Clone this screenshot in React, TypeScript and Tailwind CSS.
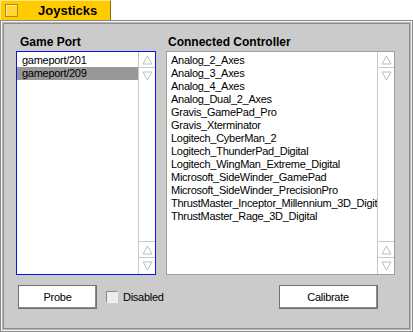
import React from "react";

const controllers = [
  "Analog_2_Axes",
  "Analog_3_Axes",
  "Analog_4_Axes",
  "Analog_Dual_2_Axes",
  "Gravis_GamePad_Pro",
  "Gravis_Xterminator",
  "Logitech_CyberMan_2",
  "Logitech_ThunderPad_Digital",
  "Logitech_WingMan_Extreme_Digital",
  "Microsoft_SideWinder_GamePad",
  "Microsoft_SideWinder_PrecisionPro",
  "ThrustMaster_Inceptor_Millennium_3D_Digital",
  "ThrustMaster_Rage_3D_Digital",
];

const ports = ["gameport/201", "gameport/209"];

function Arrow({ up }: { up: boolean }) {
  return (
    <div className="flex h-[16px] w-full items-center justify-center border-b border-[#c8c8c8] last:border-b-0">
      <svg width="11" height="10" viewBox="0 0 11 10">
        {up ? (
          <polygon points="5.5,1 10,9 1,9" fill="none" stroke="#bdbdbd" strokeWidth="1" />
        ) : (
          <polygon points="1,1 10,1 5.5,9" fill="none" stroke="#bdbdbd" strokeWidth="1" />
        )}
      </svg>
    </div>
  );
}

function ScrollBar() {
  return (
    <div className="flex w-[17px] shrink-0 flex-col justify-between border-l border-[#c8c8c8] bg-white">
      <div className="flex flex-col">
        <Arrow up />
        <Arrow up={false} />
      </div>
      <div className="flex flex-col border-t border-[#c8c8c8]">
        <Arrow up />
        <Arrow up={false} />
      </div>
    </div>
  );
}

function Button({ label, width }: { label: string; width: string }) {
  return (
    <div
      className={`${width} flex h-[24px] items-center justify-center border border-[#707070] bg-white text-[11px] text-black shadow-[inset_-1px_-1px_0_#8a8a8a,inset_1px_1px_0_#ffffff]`}
    >
      {label}
    </div>
  );
}

export default function App() {
  return (
    <div
      className="flex h-[332px] w-[413px] flex-col bg-white text-black"
      style={{ fontFamily: '"Liberation Sans", Arial, sans-serif' }}
    >
      {/* Tab */}
      <div className="flex h-[20px] shrink-0">
        <div className="flex w-[111px] items-center border-l border-t border-r border-l-[#ffe680] border-t-[#ffe680] border-r-[#8a6a00] bg-[#ffcb00] pl-[4px]">
          <div className="h-[13px] w-[13px] border border-[#b08a00] bg-[#ffd633] shadow-[inset_1px_1px_0_#fff2b0]" />
          <span className="ml-[20px] text-[13px] font-bold leading-none">Joysticks</span>
        </div>
      </div>

      {/* Window frame */}
      <div className="flex flex-1 flex-col border border-[#8c8c8c]">
        <div className="flex flex-1 flex-col border border-[#f2f2f2]">
          <div className="flex flex-1 flex-col border border-[#b8b8b8]">
            <div className="flex flex-1 flex-col border border-[#8c8c8c]">
              <div className="flex flex-1 flex-col bg-[#cbcbcb] pl-[12px] pt-[10px] text-[11px] tracking-[-0.28px]">
                <div className="flex gap-[10px]">
                  {/* Game Port */}
                  <div className="flex w-[140px] flex-col">
                    <div className="h-[17px] pl-[4px] text-[12px] font-bold leading-[17px] tracking-normal">
                      Game Port
                    </div>
                    <div className="flex h-[224px] border border-[#1010e0] bg-white">
                      <div className="flex flex-1 flex-col pt-[2px]">
                        {ports.map((p, i) => (
                          <div
                            key={p}
                            className={`h-[13px] whitespace-nowrap pl-[5px] leading-[13px] ${i === 1 ? "bg-[#989898]" : ""}`}
                          >
                            {p}
                          </div>
                        ))}
                      </div>
                      <ScrollBar />
                    </div>
                  </div>

                  {/* Connected Controller */}
                  <div className="flex w-[229px] flex-col">
                    <div className="h-[17px] pl-[2px] text-[12px] font-bold leading-[17px] tracking-normal">
                      Connected Controller
                    </div>
                    <div className="flex h-[224px] border border-[#a0a0a0] bg-white">
                      <div className="flex min-w-0 flex-1 flex-col overflow-hidden pt-[2px]">
                        {controllers.map((c) => (
                          <div key={c} className="h-[13px] whitespace-nowrap pl-[4px] leading-[13px]">
                            {c}
                          </div>
                        ))}
                      </div>
                      <ScrollBar />
                    </div>
                  </div>
                </div>

                {/* Buttons */}
                <div className="mt-[10px] flex items-center">
                  <div className="ml-[2px]">
                    <Button label="Probe" width="w-[79px]" />
                  </div>
                  <div className="ml-[9px] flex items-center">
                    <div className="h-[12px] w-[12px] border border-t-[#8a8a8a] border-l-[#8a8a8a] border-b-[#f4f4f4] border-r-[#f4f4f4] bg-[#ececec]" />
                    <span className="ml-[5px] leading-none">Disabled</span>
                  </div>
                  <div className="ml-[115px]">
                    <Button label="Calibrate" width="w-[99px]" />
                  </div>
                </div>
              </div>
            </div>
          </div>
        </div>
      </div>
    </div>
  );
}
